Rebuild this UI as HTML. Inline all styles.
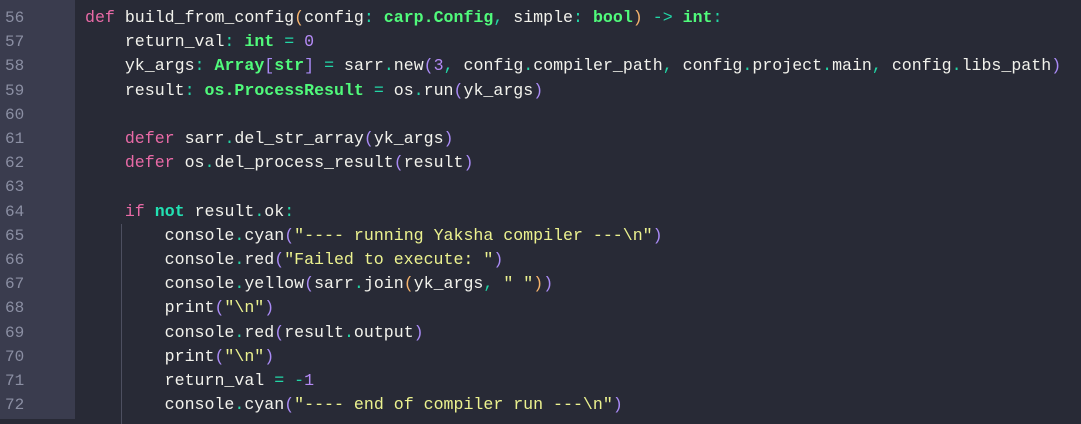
<!DOCTYPE html>
<html><head><meta charset="utf-8"><style>
html,body{margin:0;padding:0;width:1081px;height:419px;overflow:hidden;background:#282a36;}
#g{position:absolute;left:0;top:0;width:75px;height:419px;background:#3a3c4e;}
#guide{position:absolute;left:121px;top:224px;width:1px;height:200px;background:#4d4f60;}
.l{position:absolute;left:0;height:24.2px;line-height:24.2px;white-space:pre;font-family:"Liberation Mono",monospace;font-size:16.6px;color:#f2f2ec;}
.num{position:absolute;left:5px;width:40px;color:#8b8fa3;font-size:16px;}
.c{position:absolute;left:85px;}
.k{color:#e86aa6}.b{color:#22e0b2;font-weight:bold}.t{color:#50fa7b;font-weight:bold}
.o{color:#22d6a6}.p{color:#a98af5}.y{color:#f5b36c}.s{color:#ecf28f}.n{color:#b48af5}
</style></head><body>
<div id="g"></div><div id="guide"></div>
<div class="l" style="top:-18px"><span class="num">55</span></div>
<div class="l" style="top:6px"><span class="num">56</span><span class="c"><span class="k">def</span> build_from_config<span class="y">(</span>config<span class="o">:</span> <span class="t">carp.Config</span><span class="o">,</span> simple<span class="o">:</span> <span class="t">bool</span><span class="y">)</span> <span class="o">-&gt;</span> <span class="t">int</span><span class="o">:</span></span></div>
<div class="l" style="top:30.2px"><span class="num">57</span><span class="c">    return_val<span class="o">:</span> <span class="t">int</span> <span class="o">=</span> <span class="n">0</span></span></div>
<div class="l" style="top:54.4px"><span class="num">58</span><span class="c">    yk_args<span class="o">:</span> <span class="t">Array</span><span class="p">[</span><span class="t">str</span><span class="p">]</span> <span class="o">=</span> sarr<span class="o">.</span>new<span class="p">(</span><span class="n">3</span><span class="o">,</span> config<span class="o">.</span>compiler_path<span class="o">,</span> config<span class="o">.</span>project<span class="o">.</span>main<span class="o">,</span> config<span class="o">.</span>libs_path<span class="p">)</span></span></div>
<div class="l" style="top:78.6px"><span class="num">59</span><span class="c">    result<span class="o">:</span> <span class="t">os.ProcessResult</span> <span class="o">=</span> os<span class="o">.</span>run<span class="p">(</span>yk_args<span class="p">)</span></span></div>
<div class="l" style="top:102.8px"><span class="num">60</span></div>
<div class="l" style="top:127px"><span class="num">61</span><span class="c">    <span class="k">defer</span> sarr<span class="o">.</span>del_str_array<span class="p">(</span>yk_args<span class="p">)</span></span></div>
<div class="l" style="top:151.2px"><span class="num">62</span><span class="c">    <span class="k">defer</span> os<span class="o">.</span>del_process_result<span class="p">(</span>result<span class="p">)</span></span></div>
<div class="l" style="top:175.4px"><span class="num">63</span></div>
<div class="l" style="top:199.6px"><span class="num">64</span><span class="c">    <span class="k">if</span> <span class="b">not</span> result<span class="o">.</span>ok<span class="o">:</span></span></div>
<div class="l" style="top:223.8px"><span class="num">65</span><span class="c">        console<span class="o">.</span>cyan<span class="p">(</span><span class="s">"---- running Yaksha compiler ---\n"</span><span class="p">)</span></span></div>
<div class="l" style="top:248px"><span class="num">66</span><span class="c">        console<span class="o">.</span>red<span class="p">(</span><span class="s">"Failed to execute: "</span><span class="p">)</span></span></div>
<div class="l" style="top:272.2px"><span class="num">67</span><span class="c">        console<span class="o">.</span>yellow<span class="p">(</span>sarr<span class="o">.</span>join<span class="y">(</span>yk_args<span class="o">,</span> <span class="s">" "</span><span class="y">)</span><span class="p">)</span></span></div>
<div class="l" style="top:296.4px"><span class="num">68</span><span class="c">        print<span class="p">(</span><span class="s">"\n"</span><span class="p">)</span></span></div>
<div class="l" style="top:320.6px"><span class="num">69</span><span class="c">        console<span class="o">.</span>red<span class="p">(</span>result<span class="o">.</span>output<span class="p">)</span></span></div>
<div class="l" style="top:344.8px"><span class="num">70</span><span class="c">        print<span class="p">(</span><span class="s">"\n"</span><span class="p">)</span></span></div>
<div class="l" style="top:369px"><span class="num">71</span><span class="c">        return_val <span class="o">=</span> <span class="o">-</span><span class="n">1</span></span></div>
<div class="l" style="top:393.2px"><span class="num">72</span><span class="c">        console<span class="o">.</span>cyan<span class="p">(</span><span class="s">"---- end of compiler run ---\n"</span><span class="p">)</span></span></div>
</body></html>
